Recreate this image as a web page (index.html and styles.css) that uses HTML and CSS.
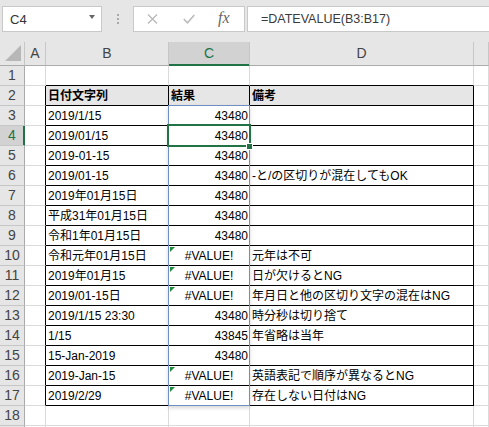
FILE: index.html
```html
<!DOCTYPE html>
<html lang="ja">
<head>
<meta charset="utf-8">
<title>DATEVALUE</title>
<link rel="stylesheet" href="styles.css">
</head>
<body>
<div class="toolbar">
  <div class="namebox"><span class="nb-text">C4</span><span class="nb-arrow"></span></div>
  <div class="splitter"><span></span><span></span><span></span></div>
  <div class="iconbox">
    <svg class="ic-x" width="11" height="10" viewBox="0 0 11 10"><path d="M1 0.5 L10 9.5 M10 0.5 L1 9.5" stroke="#b9b9b9" stroke-width="1.3" fill="none"/></svg>
    <svg class="ic-ok" width="12" height="10" viewBox="0 0 12 10"><path d="M0.8 5 L4.5 8.8 L11.3 1" stroke="#b9b9b9" stroke-width="1.5" fill="none"/></svg>
    <span class="fx">fx</span>
  </div>
  <div class="formula">=DATEVALUE(B3:B17)</div>
</div>
<div class="sheet">
  <div class="grid">
    <div class="h corner"><svg width="24" height="23" viewBox="0 0 24 23"><polygon points="5,19 21,3 21,19" fill="#b7b7b7"/></svg></div>
    <div class="h">A</div><div class="h">B</div><div class="h on">C</div><div class="h">D</div><div class="h"></div>

    <div class="r">1</div><div class="c"></div><div class="c top"></div><div class="c top"></div><div class="c top"></div><div class="c"></div>

    <div class="r">2</div><div class="c k"></div><div class="c t th">日付文字列</div><div class="c t th">結果</div><div class="c t th">備考</div><div class="c"></div>

    <div class="r">3</div><div class="c k"></div><div class="c t">2019/1/15</div><div class="c t num">43480</div><div class="c t"></div><div class="c"></div>
    <div class="r on">4</div><div class="c k"></div><div class="c t">2019/01/15</div><div class="c t num">43480</div><div class="c t"></div><div class="c"></div>
    <div class="r">5</div><div class="c k"></div><div class="c t">2019-01-15</div><div class="c t num">43480</div><div class="c t"></div><div class="c"></div>
    <div class="r">6</div><div class="c k"></div><div class="c t">2019/01-15</div><div class="c t num">43480</div><div class="c t">-と/の区切りが混在してもOK</div><div class="c"></div>
    <div class="r">7</div><div class="c k"></div><div class="c t">2019年01月15日</div><div class="c t num">43480</div><div class="c t"></div><div class="c"></div>
    <div class="r">8</div><div class="c k"></div><div class="c t">平成31年01月15日</div><div class="c t num">43480</div><div class="c t"></div><div class="c"></div>
    <div class="r">9</div><div class="c k"></div><div class="c t">令和1年01月15日</div><div class="c t num">43480</div><div class="c t"></div><div class="c"></div>
    <div class="r">10</div><div class="c k"></div><div class="c t">令和元年01月15日</div><div class="c t err">#VALUE!</div><div class="c t">元年は不可</div><div class="c"></div>
    <div class="r">11</div><div class="c k"></div><div class="c t">2019年01月15</div><div class="c t err">#VALUE!</div><div class="c t">日が欠けるとNG</div><div class="c"></div>
    <div class="r">12</div><div class="c k"></div><div class="c t">2019/01-15日</div><div class="c t err">#VALUE!</div><div class="c t">年月日と他の区切り文字の混在はNG</div><div class="c"></div>
    <div class="r">13</div><div class="c k"></div><div class="c t">2019/1/15 23:30</div><div class="c t num">43480</div><div class="c t">時分秒は切り捨て</div><div class="c"></div>
    <div class="r">14</div><div class="c k"></div><div class="c t">1/15</div><div class="c t num">43845</div><div class="c t">年省略は当年</div><div class="c"></div>
    <div class="r">15</div><div class="c k"></div><div class="c t">15-Jan-2019</div><div class="c t num">43480</div><div class="c t"></div><div class="c"></div>
    <div class="r">16</div><div class="c k"></div><div class="c t">2019-Jan-15</div><div class="c t err">#VALUE!</div><div class="c t">英語表記で順序が異なるとNG</div><div class="c"></div>
    <div class="r">17</div><div class="c k"></div><div class="c t">2019/2/29</div><div class="c t err">#VALUE!</div><div class="c t">存在しない日付はNG</div><div class="c"></div>

    <div class="r">18</div><div class="c"></div><div class="c"></div><div class="c"></div><div class="c"></div><div class="c"></div>
    <div class="r"></div><div class="c"></div><div class="c"></div><div class="c"></div><div class="c"></div><div class="c"></div>
  </div>
  <div class="spill"></div>
  <div class="sel"></div>
  <div class="handle"></div>
</div>
</body>
</html>
```
FILE: styles.css
```css
html, body {
  margin: 0;
  padding: 0;
}
body {
  background: #e6e6e6;
  width: 489px;
  height: 427px;
  overflow: hidden;
  font-family: "Liberation Sans", "Noto Sans CJK JP", sans-serif;
}

/* formula bar */
.toolbar {
  display: flex;
  align-items: flex-start;
  height: 42px;
  padding-top: 6px;
  box-sizing: border-box;
}
.namebox {
  margin-left: 2px;
  width: 100px;
  height: 26px;
  box-sizing: border-box;
  background: #fff;
  border: 1px solid #c9c9c9;
  display: flex;
  align-items: center;
  justify-content: space-between;
  padding: 0 6px 0 7px;
  font-size: 13px;
  color: #333;
}
.nb-arrow {
  width: 0;
  height: 0;
  border-left: 3.5px solid transparent;
  border-right: 3.5px solid transparent;
  border-top: 4px solid #666;
  margin-top: -4px;
}
.splitter {
  width: 31px;
  height: 26px;
  display: flex;
  flex-direction: column;
  align-items: center;
  justify-content: center;
  gap: 2px;
}
.splitter span {
  width: 2px;
  height: 2px;
  background: #a9a9a9;
}
.iconbox {
  width: 112px;
  height: 26px;
  box-sizing: border-box;
  background: #fff;
  border: 1px solid #c9c9c9;
  display: flex;
  align-items: center;
}
.ic-x { margin-left: 13px; }
.ic-ok { margin-left: 25px; }
.fx {
  margin-left: 23px;
  font-family: "Liberation Serif", serif;
  font-style: italic;
  font-size: 16px;
  color: #666;
  margin-top: -3px;
}
.formula {
  flex: 1;
  margin-left: 2px;
  margin-right: -3px;
  height: 26px;
  box-sizing: border-box;
  background: #fff;
  border: 1px solid #c9c9c9;
  padding-left: 13px;
  font-size: 12.5px;
  line-height: 24px;
  color: #3a3a3a;
}

/* sheet */
.sheet {
  position: relative;
  background: #fff;
}
.grid {
  display: grid;
  grid-template-columns: 25px 21px 123px 81px 224px 1fr;
  grid-template-rows: 24px repeat(19, 20px);
}
.grid > div {
  box-sizing: border-box;
  border-right: 1px solid #dadada;
  border-bottom: 1px solid #dadada;
  white-space: nowrap;
}
.grid > .h {
  background: #e6e6e6;
  border-right-color: #c6c6c6;
  border-bottom-color: #ababab;
  text-align: center;
  font-size: 14px;
  line-height: 23px;
  color: #444;
}
.grid > .h.on {
  background: #d2d2d2;
  color: #217346;
  border-bottom-color: #217346;
  box-shadow: inset 0 -1px #217346;
}
.grid > .corner {
  line-height: 0;
  text-align: left;
}
.grid > .r {
  background: #e6e6e6;
  border-right-color: #ababab;
  border-bottom-color: #c6c6c6;
  text-align: center;
  font-size: 14px;
  line-height: 19px;
  color: #444;
}
.grid > .r.on {
  background: #d2d2d2;
  color: #217346;
  border-right-color: #217346;
  box-shadow: inset -1px 0 #217346;
}
.c {
  font-size: 12px;
  line-height: 18px;
  padding: 1px 2px 0 2px;
  color: #000;
}
.grid > .k { border-right-color: #000; }
.grid > .top { border-bottom-color: #000; }
.grid > .t {
  border-right-color: #000;
  border-bottom-color: #000;
}
.th {
  background: #e7e6e6;
  font-weight: bold;
}
.num {
  text-align: right;
  padding-right: 1px;
}
.err {
  text-align: center;
  position: relative;
}
.err::before {
  content: "";
  position: absolute;
  left: 1px;
  top: 1px;
  width: 0;
  height: 0;
  border-top: 5px solid #1f8a3c;
  border-right: 5px solid transparent;
}

/* overlays */
.spill {
  position: absolute;
  left: 168px;
  top: 63px;
  width: 82px;
  height: 301px;
  box-sizing: border-box;
  border: 1px solid #6f8fc4;
  box-shadow: 0 2px 4px rgba(0, 0, 0, 0.16);
  pointer-events: none;
}
.sel {
  position: absolute;
  left: 167px;
  top: 82px;
  width: 84px;
  height: 23px;
  box-sizing: border-box;
  border: 2px solid #217346;
}
.handle {
  position: absolute;
  left: 246px;
  top: 101px;
  width: 7px;
  height: 7px;
  box-sizing: border-box;
  background: #217346;
  border: 1px solid #fff;
}
```
